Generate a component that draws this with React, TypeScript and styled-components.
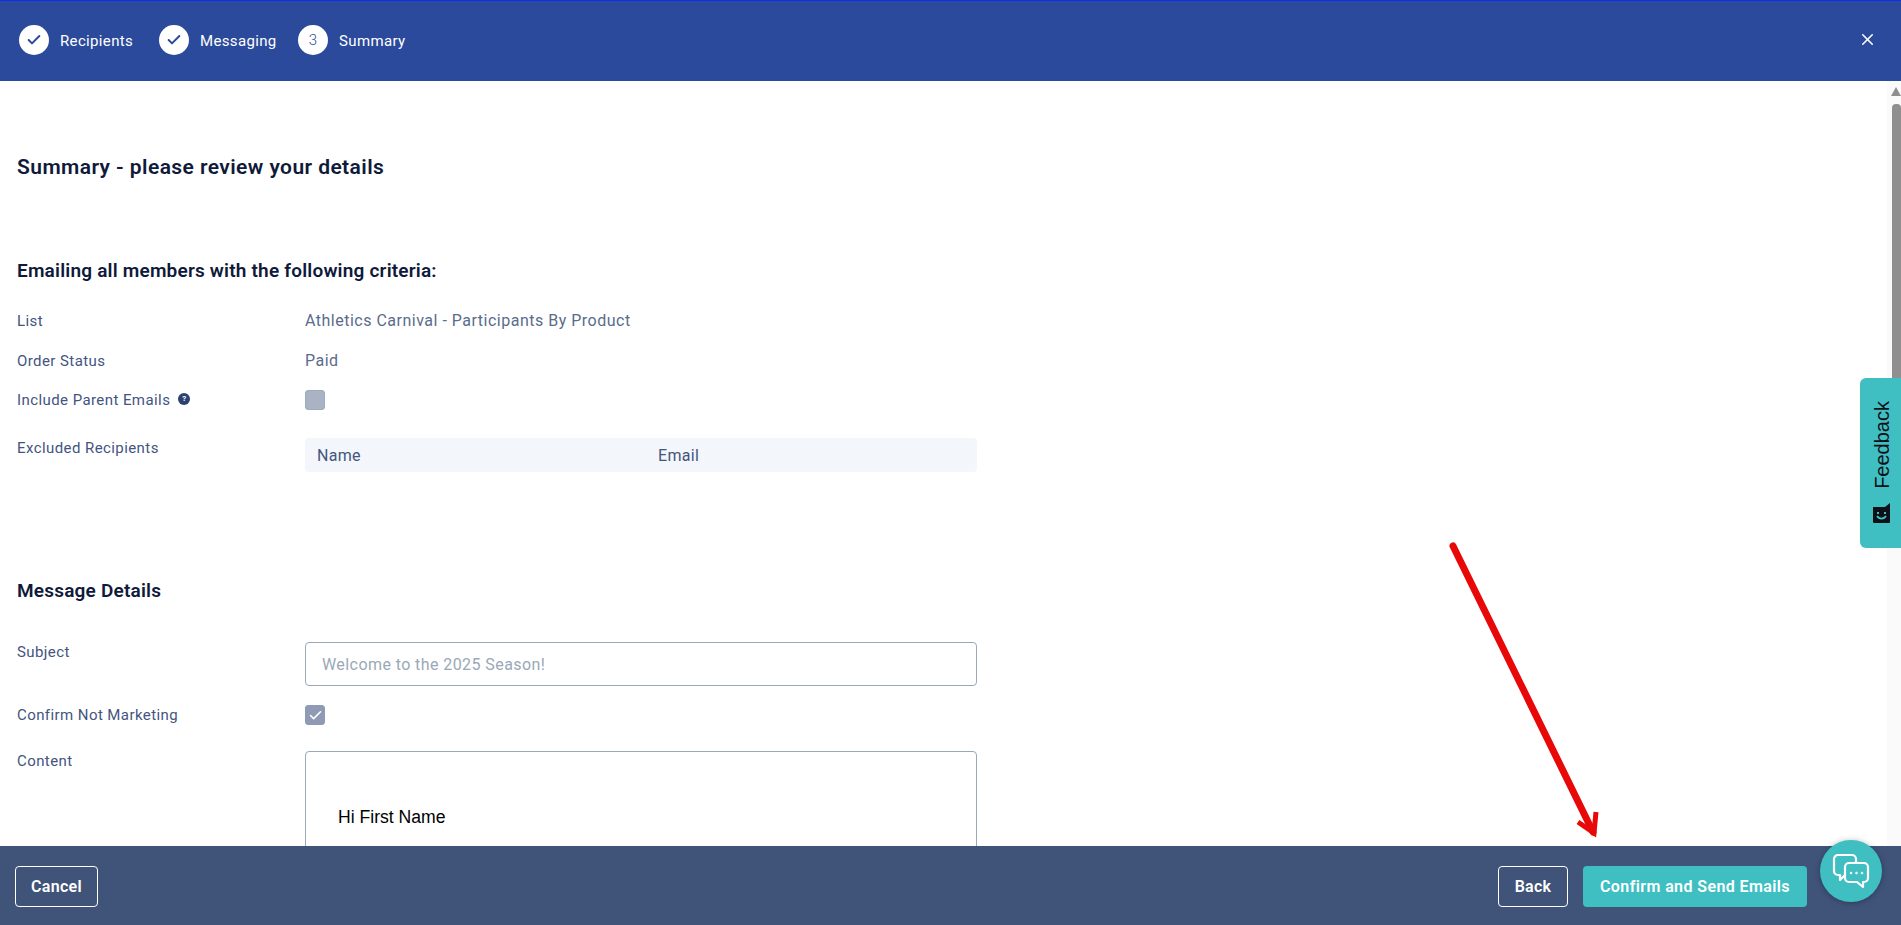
import React from "react";
import styled, { createGlobalStyle } from "styled-components";
import { Check, X } from "lucide-react";

const Global = createGlobalStyle`
  html, body { margin: 0; padding: 0; height: 100%; overflow: hidden; background: #fff; }
  body { font-family: Roboto, "Liberation Sans", sans-serif; }
  * { box-sizing: border-box; }
`;

const Page = styled.div`
  position: relative;
  display: flex;
  flex-direction: column;
  width: 1901px;
  height: 925px;
  overflow: hidden;
`;

const Header = styled.header`
  flex: none;
  height: 81px;
  padding: 0 19px 2px;
  display: flex;
  align-items: center;
  justify-content: space-between;
  background: #2b4a9b;
  border-top: 1px solid #0f2fe8;
`;

const Steps = styled.div`
  display: flex;
  align-items: center;
`;

const Step = styled.div<{ $width: number }>`
  display: flex;
  align-items: center;
  gap: 11px;
  width: ${(p) => p.$width}px;
  color: #fff;
  font-size: 15px;
  letter-spacing: 0.35px;
`;

const StepLabel = styled.span`
  padding-top: 2px;
`;

const StepCircle = styled.span`
  width: 30px;
  height: 30px;
  flex: none;
  border-radius: 50%;
  background: #fff;
  color: #2b4a9b;
  display: flex;
  align-items: center;
  justify-content: center;
  font-size: 15px;
  font-weight: 300;
`;

const CloseButton = styled.span`
  display: flex;
  color: #fff;
  margin: -2px 5px 0 0;
`;

const Body = styled.div`
  flex: 1;
  min-height: 0;
  display: flex;
  overflow: hidden;
`;

const Main = styled.main`
  flex: 1;
  min-width: 0;
  padding: 72px 0 0 17px;
`;

const Title = styled.h1`
  margin: 0;
  font-size: 21px;
  line-height: 28px;
  font-weight: 600;
  letter-spacing: 0.42px;
  color: #0f1a3a;
`;

const SectionTitle = styled.h2<{ $top: number }>`
  margin: ${(p) => p.$top}px 0 0;
  font-size: 19px;
  line-height: 24px;
  font-weight: 600;
  color: #0f1a3a;
  letter-spacing: 0.2px;
`;

const Row = styled.div<{ $top: number }>`
  display: grid;
  grid-template-columns: 288px 672px;
  margin-top: ${(p) => p.$top}px;
  align-items: start;
`;

const Label = styled.div`
  display: flex;
  align-items: center;
  gap: 8px;
  font-size: 15px;
  line-height: 20px;
  letter-spacing: 0.42px;
  color: #43557f;
`;

const Value = styled.div`
  font-size: 16px;
  line-height: 20px;
  letter-spacing: 0.5px;
  color: #5a6c8c;
`;

const Info = styled.span`
  width: 12px;
  height: 12px;
  border-radius: 50%;
  background: #2b4170;
  color: #fff;
  font-size: 8px;
  font-weight: 700;
  letter-spacing: 0;
  display: inline-flex;
  align-items: center;
  justify-content: center;
  margin-top: -3px;
`;

const Checkbox = styled.span<{ $checked?: boolean }>`
  width: 20px;
  height: 20px;
  border-radius: 3px;
  background: ${(p) => (p.$checked ? "#8f9bb5" : "#aab3c4")};
  border: 1px solid ${(p) => (p.$checked ? "#8f9bb5" : "#a0aabd")};
  color: #fff;
  display: flex;
  align-items: center;
  justify-content: center;
`;

const ExcludedTable = styled.div`
  height: 34px;
  padding: 0 12px;
  display: grid;
  grid-template-columns: 341px 1fr;
  align-items: center;
  background: #f3f6fa;
  border-radius: 4px;
  font-size: 16px;
  letter-spacing: 0.3px;
  color: #43557f;
`;

const Input = styled.div`
  height: 44px;
  padding: 0 16px;
  display: flex;
  align-items: center;
  border: 1px solid #9aa8b8;
  border-radius: 4px;
  font-size: 16px;
  letter-spacing: 0.42px;
  color: #9aa8b8;
`;

const Editor = styled.div`
  height: 140px;
  padding: 54px 32px 0;
  border: 1px solid #9aa8b8;
  border-radius: 4px;
  font-family: "Liberation Sans", Arial, sans-serif;
  font-size: 17.6px;
  line-height: 22px;
  color: #000;
`;

const Scrollbar = styled.div`
  flex: none;
  width: 14px;
  padding-top: 6px;
  background: #fafafa;
  display: flex;
  flex-direction: column;
  align-items: flex-end;
  gap: 8px;
`;

const ScrollArrow = styled.span`
  width: 0;
  height: 0;
  border-left: 5px solid transparent;
  border-right: 5px solid transparent;
  border-bottom: 9px solid #8f8f8f;
`;

const ScrollThumb = styled.span`
  width: 9px;
  height: 285px;
  border-radius: 4px 4px 0 0;
  background: #8f8f8f;
`;

const Footer = styled.footer`
  flex: none;
  height: 79px;
  padding: 20px 94px 0 15px;
  display: flex;
  align-items: flex-start;
  background: #40547a;
`;

const Outline = styled.button<{ $width: number }>`
  width: ${(p) => p.$width}px;
  height: 41px;
  border: 1px solid #fff;
  border-radius: 4px;
  background: transparent;
  color: #fff;
  font: 600 16px Roboto, sans-serif;
  letter-spacing: 0.3px;
`;

const Primary = styled.button`
  width: 224px;
  height: 41px;
  margin-left: 15px;
  border: 0;
  border-radius: 4px;
  background: #3fbfc2;
  color: #fff;
  font: 600 16px Roboto, sans-serif;
  letter-spacing: 0.4px;
`;

const Spacer = styled.div`
  flex: 1;
`;

const Feedback = styled.div`
  position: absolute;
  right: 0;
  top: 378px;
  width: 41px;
  height: 170px;
  padding: 0 0 25px 2px;
  border-radius: 6px 0 0 6px;
  background: #3fbfc2;
  display: flex;
  flex-direction: column-reverse;
  align-items: center;
  gap: 14px;
`;

const FeedbackText = styled.span`
  writing-mode: vertical-rl;
  transform: rotate(180deg);
  font-family: "Liberation Sans", Arial, sans-serif;
  font-size: 20px;
  line-height: 22px;
  color: #101018;
`;

const ChatBubble = styled.div`
  position: absolute;
  left: 1820px;
  top: 840px;
  width: 62px;
  height: 62px;
  border-radius: 50%;
  background: #3fbfc2;
  box-shadow: 0 1px 6px rgba(0, 0, 0, 0.3);
  display: flex;
  align-items: center;
  justify-content: center;
`;

const Overlay = styled.svg`
  position: absolute;
  left: 0;
  top: 0;
  pointer-events: none;
`;

export default function App() {
  return (
    <>
      <Global />
      <Page>
        <Header>
          <Steps>
            <Step $width={140}>
              <StepCircle>
                <Check size={16} strokeWidth={3} />
              </StepCircle>
              <StepLabel>Recipients</StepLabel>
            </Step>
            <Step $width={139}>
              <StepCircle>
                <Check size={16} strokeWidth={3} />
              </StepCircle>
              <StepLabel>Messaging</StepLabel>
            </Step>
            <Step $width={140}>
              <StepCircle>3</StepCircle>
              <StepLabel>Summary</StepLabel>
            </Step>
          </Steps>
          <CloseButton>
            <X size={19} strokeWidth={2} />
          </CloseButton>
        </Header>
        <Body>
          <Main>
            <Title>Summary - please review your details</Title>
            <SectionTitle $top={78}>Emailing all members with the following criteria:</SectionTitle>
            <Row $top={28}>
              <Label>List</Label>
              <Value>Athletics Carnival - Participants By Product</Value>
            </Row>
            <Row $top={20}>
              <Label>Order Status</Label>
              <Value>Paid</Value>
            </Row>
            <Row $top={19}>
              <Label>
                Include Parent Emails <Info>?</Info>
              </Label>
              <Checkbox />
            </Row>
            <Row $top={28}>
              <Label>Excluded Recipients</Label>
              <ExcludedTable>
                <span>Name</span>
                <span>Email</span>
              </ExcludedTable>
            </Row>
            <SectionTitle $top={107}>Message Details</SectionTitle>
            <Row $top={39}>
              <Label>Subject</Label>
              <Input>Welcome to the 2025 Season!</Input>
            </Row>
            <Row $top={19}>
              <Label>Confirm Not Marketing</Label>
              <Checkbox $checked>
                <Check size={15} strokeWidth={2.5} />
              </Checkbox>
            </Row>
            <Row $top={26}>
              <Label>Content</Label>
              <Editor>Hi First Name</Editor>
            </Row>
          </Main>
          <Scrollbar>
            <ScrollArrow />
            <ScrollThumb />
          </Scrollbar>
        </Body>
        <Footer>
          <Outline $width={83}>Cancel</Outline>
          <Spacer />
          <Outline $width={70}>Back</Outline>
          <Primary>Confirm and Send Emails</Primary>
        </Footer>
        <Feedback>
          <svg width="19" height="20" viewBox="0 0 19 20">
            <path d="M1 4h17v15a1 1 0 0 1-1 1H2a1 1 0 0 1-1-1z" fill="#101018" />
            <path d="M13 4l5-4v4z" fill="#101018" />
            <path d="M6 9v2M13 9v2" stroke="#3fbfc2" strokeWidth="2" />
            <path d="M5 13c2 3.4 7 3.4 9 0" stroke="#3fbfc2" strokeWidth="1.7" fill="none" />
          </svg>
          <FeedbackText>Feedback</FeedbackText>
        </Feedback>
        <ChatBubble>
          <svg width="38" height="36" viewBox="0 0 38 36" fill="none" stroke="#fff" strokeWidth="2.2" strokeLinejoin="round">
            <path d="M24 9V6a4 4 0 0 0-4-4H6a4 4 0 0 0-4 4v12a4 4 0 0 0 4 4h2v5l5-5" />
            <path d="M17 10h15a4 4 0 0 1 4 4v11a4 4 0 0 1-4 4h-1v5l-6-5h-8a4 4 0 0 1-4-4V14a4 4 0 0 1 4-4z" fill="#3fbfc2" />
            <circle cx="19" cy="20" r="0.9" fill="#fff" strokeWidth="0.8" />
            <circle cx="24.5" cy="20" r="0.9" fill="#fff" strokeWidth="0.8" />
            <circle cx="30" cy="20" r="0.9" fill="#fff" strokeWidth="0.8" />
          </svg>
        </ChatBubble>
        <Overlay width="1901" height="925" viewBox="0 0 1901 925">
          <path d="M1453 546L1593 832" stroke="#e80808" strokeWidth="7" strokeLinecap="round" fill="none" />
          <path d="M1578 822L1594 833L1596 812" stroke="#e80808" strokeWidth="5" fill="none" />
        </Overlay>
      </Page>
    </>
  );
}
